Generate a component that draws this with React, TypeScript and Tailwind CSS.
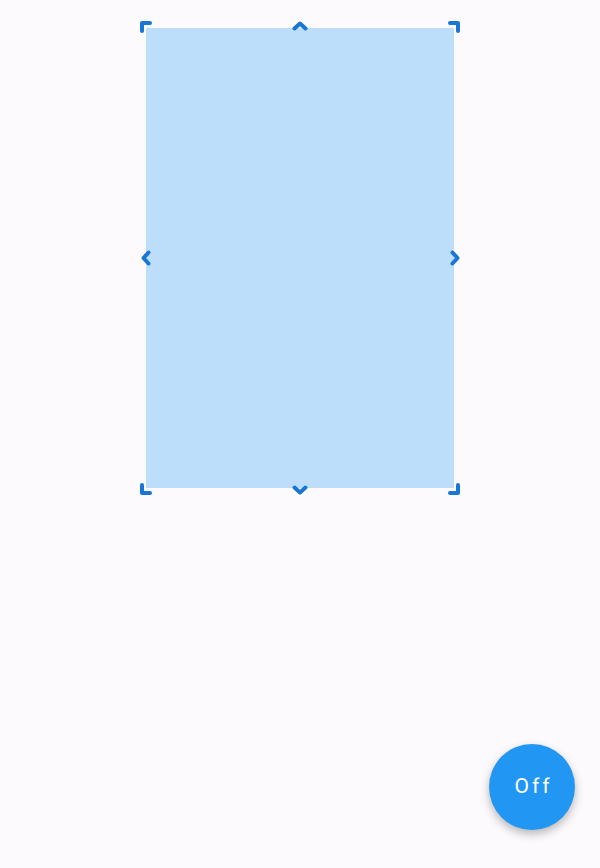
import React from "react";

const blue = "#1976d2";

function Handle({ className, d, w, h }: { className: string; d: string; w: number; h: number }) {
  return (
    <svg
      className={`absolute ${className}`}
      width={w}
      height={h}
      viewBox={`0 0 ${w} ${h}`}
      fill="none"
      stroke={blue}
      strokeWidth={4}
      strokeLinecap="round"
      strokeLinejoin="round"
    >
      <path d={d} />
    </svg>
  );
}

export default function App() {
  return (
    <div className="relative min-h-[868px] w-full bg-[#fcfafc] font-['Roboto',sans-serif]">
      <div className="pt-[28px]">
        {/* crop area with drag handles */}
        <div className="relative mx-auto h-[460px] w-[308px] bg-[#bcdefb]">
          <Handle className="left-[-6px] top-[-7px]" w={12} h={12} d="M2 10 L2 2 L10 2" />
          <Handle className="left-[302px] top-[-7px]" w={12} h={12} d="M2 2 L10 2 L10 10" />
          <Handle className="left-[-6px] top-[455px]" w={12} h={12} d="M2 2 L2 10 L10 10" />
          <Handle className="left-[302px] top-[455px]" w={12} h={12} d="M10 2 L10 10 L2 10" />
          <Handle className="left-[146px] top-[-7px]" w={16} h={10} d="M2.5 7.5 L8 2.5 L13.5 7.5" />
          <Handle className="left-[146px] top-[457px]" w={16} h={10} d="M2.5 2.5 L8 7.5 L13.5 2.5" />
          <Handle className="left-[-5px] top-[222px]" w={10} h={16} d="M7.5 2.5 L2.5 8 L7.5 13.5" />
          <Handle className="left-[304px] top-[222px]" w={10} h={16} d="M2.5 2.5 L7.5 8 L2.5 13.5" />
        </div>
      </div>
      <button className="absolute left-[489px] top-[744px] flex h-[86px] w-[86px] items-center justify-center rounded-full bg-[#2196f3] pl-[3px] text-[21px] tracking-[3px] text-white shadow-[0_4px_10px_rgba(0,0,0,0.28)]">
        Off
      </button>
    </div>
  );
}
